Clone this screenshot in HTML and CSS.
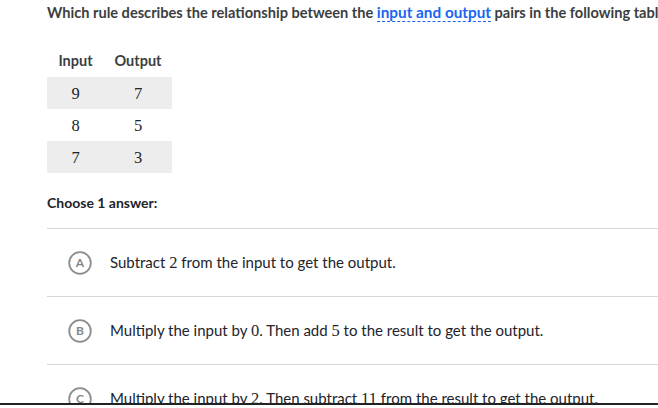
FILE: index.html
```html
<!DOCTYPE html>
<html>
<head>
<meta charset="utf-8">
<link rel="stylesheet" href="styles.css">
</head>
<body>
<div class="page">
  <p class="question">Which rule describes the relationship between the <span class="term">input and output</span> pairs in the following table?</p>
  <table class="data">
    <thead>
      <tr><th>Input</th><th>Output</th></tr>
    </thead>
    <tbody>
      <tr class="shade"><td><span class="m">9</span></td><td><span class="m">7</span></td></tr>
      <tr><td><span class="m">8</span></td><td><span class="m">5</span></td></tr>
      <tr class="shade"><td><span class="m">7</span></td><td><span class="m">3</span></td></tr>
    </tbody>
  </table>
  <p class="choose">Choose 1 answer:</p>
  <ul class="choices">
    <li class="choice">
      <span class="badge"><svg class="ring" width="24" height="24" viewBox="0 0 24 24"><circle cx="12" cy="12" r="10.8" fill="none" stroke="#8a8d8e" stroke-width="1.8"/></svg><span class="letter">A</span></span>
      <span class="text">Subtract <span class="m">2</span> from the input to get the output.</span>
    </li>
    <li class="choice">
      <span class="badge"><svg class="ring" width="24" height="24" viewBox="0 0 24 24"><circle cx="12" cy="12" r="10.8" fill="none" stroke="#8a8d8e" stroke-width="1.8"/></svg><span class="letter">B</span></span>
      <span class="text">Multiply the input by <span class="m">0</span>. Then add <span class="m">5</span> to the result to get the output.</span>
    </li>
    <li class="choice">
      <span class="badge"><svg class="ring" width="24" height="24" viewBox="0 0 24 24"><circle cx="12" cy="12" r="10.8" fill="none" stroke="#8a8d8e" stroke-width="1.8"/></svg><span class="letter">C</span></span>
      <span class="text">Multiply the input by <span class="m">2</span>. Then subtract <span class="m">11</span> from the result to get the output.</span>
    </li>
  </ul>
</div>
<div class="cutline"></div>
</body>
</html>
```

FILE: styles.css
```css
html, body {
  margin: 0;
  padding: 0;
  background: #fff;
  width: 658px;
  height: 408px;
  overflow: hidden;
  position: relative;
}
.page {
  padding: 0 0 0 47px;
  font-family: Lato, "Open Sans", sans-serif;
  color: #21242c;
  height: 404px;
  overflow: hidden;
}
.question {
  margin: 0;
  padding-top: 2px;
  font-size: 14.6px;
  font-weight: 700;
  line-height: 20px;
  white-space: nowrap;
  color: #3b3e40;
}
.term {
  color: #1865f2;
  font-size: 15.3px;
  border-bottom: 1px dashed #1865f2;
}
.data {
  margin-top: 24px;
  border-collapse: collapse;
  width: 125px;
}
.data th {
  font-size: 14.5px;
  font-weight: 700;
  color: #3b3e40;
  height: 26px;
  padding: 0 0 4px 0;
  text-align: center;
}
.data th:first-child { width: 57px; }
.data td {
  height: 32px;
  padding: 0;
  text-align: center;
  color: #21242c;
}
.data tr.shade td { background: #ededed; }
.choose {
  margin: 21px 0 0 0;
  font-size: 14px;
  font-weight: 700;
  line-height: 18px;
  color: #21242c;
}
.choices {
  list-style: none;
  margin: 16px 0 0 0;
  padding: 0;
}
.choice {
  display: flex;
  align-items: center;
  height: 67px;
  border-top: 1px solid #d6d6d6;
  padding-left: 21px;
  gap: 18px;
}
.badge {
  display: grid;
  width: 24px;
  height: 24px;
  flex: 0 0 24px;
}
.ring, .letter {
  grid-area: 1 / 1;
}
.ring { display: block; }
.letter {
  display: flex;
  align-items: center;
  justify-content: center;
  font-size: 12px;
  font-weight: 700;
  color: #85888a;
}
.text {
  font-size: 15px;
  white-space: nowrap;
  color: #21242c;
}
.m {
  font-family: "Liberation Serif", "Times New Roman", serif;
  font-size: 16.5px;
}
.cutline {
  position: absolute;
  left: 0;
  right: 0;
  top: 403px;
  height: 2px;
  background: #222;
}
```
